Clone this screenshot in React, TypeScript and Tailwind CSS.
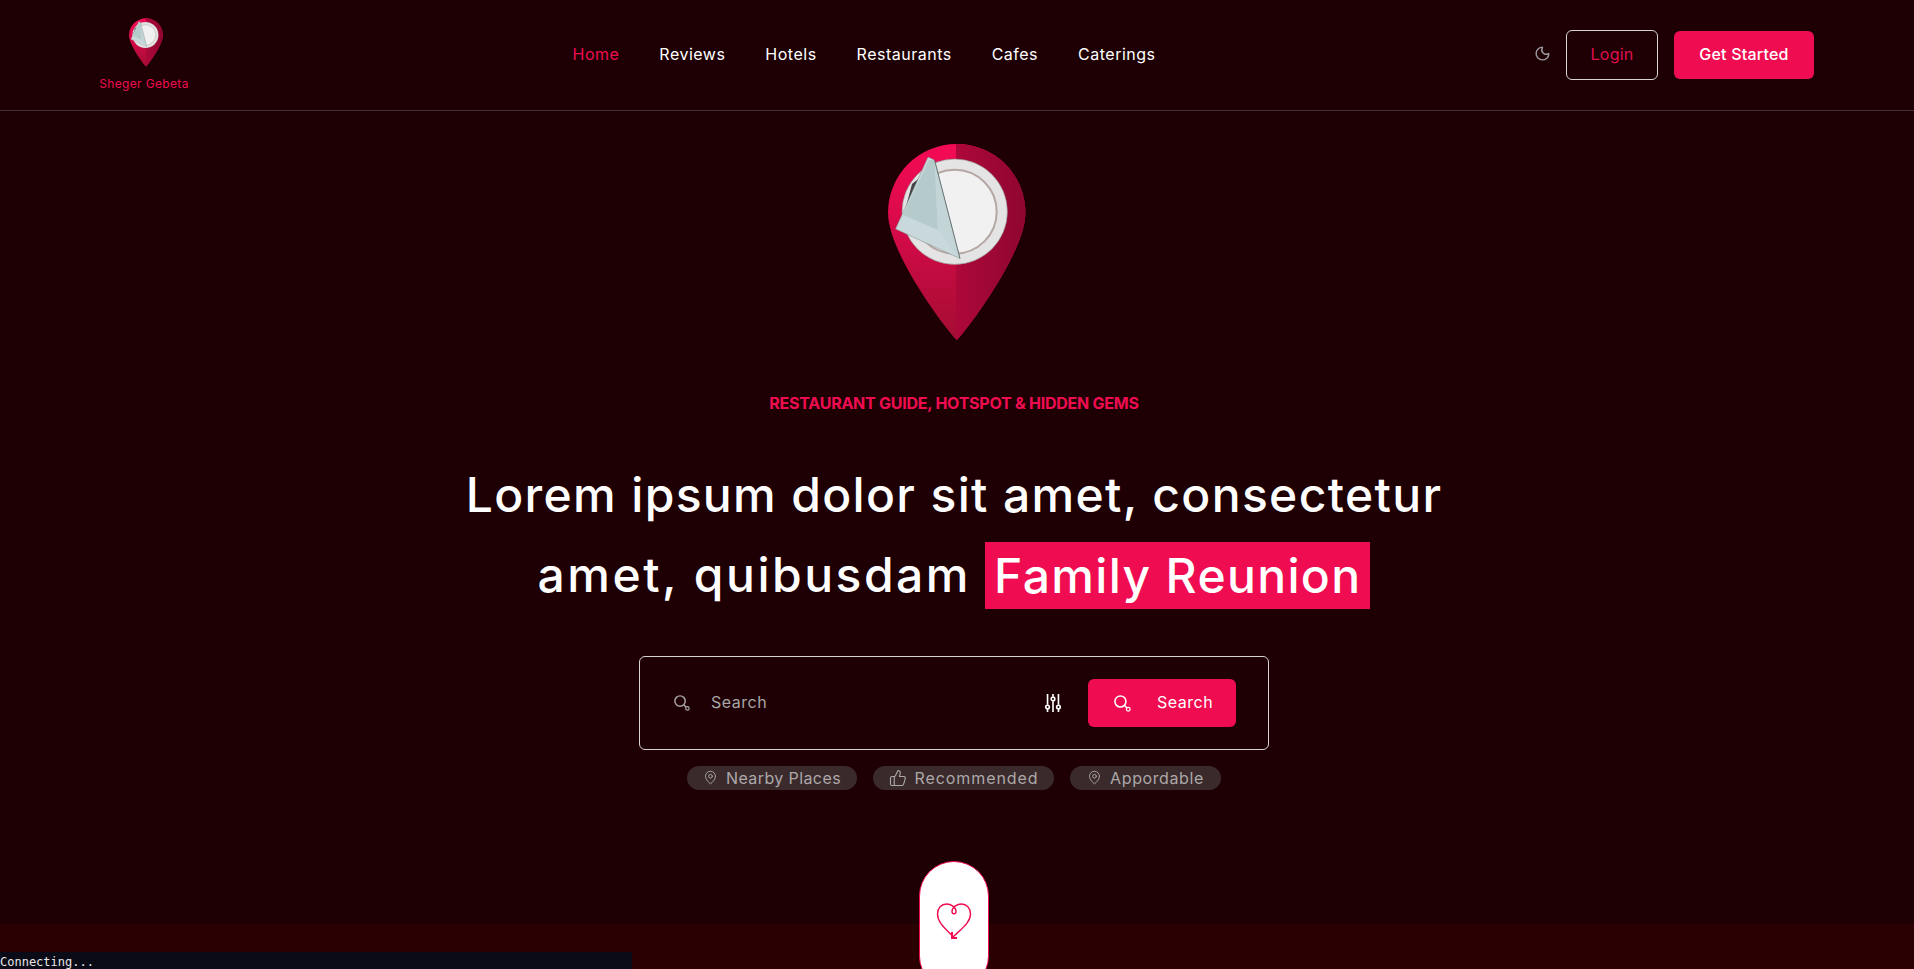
import { useId } from 'react';
import { Moon, MapPin, ThumbsUp } from 'lucide-react';

const navLinks = ['Home', 'Reviews', 'Hotels', 'Restaurants', 'Cafes', 'Caterings'];

function PinLogo({ className }: { className: string }) {
  const id = useId();
  const pin = 'M68.7 196 C62 191 0 110 0 68.7 A68.7 68.7 0 0 1 137.4 68.7 C137.4 110 75 191 68.7 196 Z';
  return (
    <svg viewBox="0 0 138 196" className={className}>
      <defs>
        <linearGradient id={`${id}l`} x1="0" y1="0" x2="0" y2="1">
          <stop offset="0" stopColor="#f50b55" />
          <stop offset="0.45" stopColor="#d50a47" />
          <stop offset="0.75" stopColor="#b90c3c" />
          <stop offset="1" stopColor="#a30d34" />
        </linearGradient>
        <linearGradient id={`${id}r`} x1="0" y1="0" x2="1" y2="0">
          <stop offset="0" stopColor="#cc0a44" />
          <stop offset="1" stopColor="#8f0630" />
        </linearGradient>
        <clipPath id={`${id}c`}>
          <rect x="68" y="0" width="70" height="196" />
        </clipPath>
      </defs>
      <path d={pin} fill={`url(#${id}l)`} />
      <path d={pin} fill={`url(#${id}r)`} clipPath={`url(#${id}c)`} />
      <circle cx="66.7" cy="67.7" r="52.7" fill="#e4e4e4" stroke="#8c8c8c" strokeWidth="0.6" />
      <circle cx="66.7" cy="67.7" r="42" fill="#f1f1f1" stroke="#b5a7a3" strokeWidth="2" />
      <path d="M40 27 L24 40 L16 70 L66 110 Z" fill="#1b1b1b" opacity="0.8" />
      <polygon points="40,13 46.5,16 72,114.5 7.5,85" fill="#c9d8da" stroke="#7d8a8b" strokeWidth="0.5" />
      <polygon points="41,16 46.5,16 50,86 15,71" fill="#b5cbcb" />
      <polygon points="46.5,16 72,114.5 50,86" fill="#c3d5d7" />
      <polyline points="46.5,16 72,114.5" fill="none" stroke="#55605f" strokeWidth="0.8" />
    </svg>
  );
}

function SearchIcon({ className }: { className: string }) {
  return (
    <svg viewBox="0.5 0.5 18.5 18.5" fill="none" stroke="currentColor" strokeWidth="1.7" className={className}>
      <circle cx="7.5" cy="7.5" r="6" />
      <path d="M12 12 L14.5 14.5" />
      <circle cx="16" cy="16" r="2" strokeWidth="1.4" />
    </svg>
  );
}

function SlidersIcon() {
  return (
    <svg viewBox="0 0 18 22" fill="none" stroke="white" strokeWidth="1.8" className="h-[20px] w-[18px]">
      <path d="M3 1 V13 M3 18 V21 M9 1 V4 M9 9 V21 M15 1 V13 M15 18 V21" />
      <circle cx="3" cy="15.5" r="2" />
      <circle cx="9" cy="6.5" r="2" />
      <circle cx="15" cy="15.5" r="2" />
    </svg>
  );
}

function HeartArrow() {
  return (
    <svg viewBox="0 0 36 38" fill="none" stroke="#f00c50" strokeWidth="1.4" className="h-[38px] w-[36px]">
      <path d="M16.5 34 C11 28 1.5 21 1.5 12 C1.5 6 5.5 2 10.5 2 C15 2 20 5 20 9.5 C20 12.5 16 12.5 16 9.5 C16 5 21 2 25.5 2 C30.5 2 34.5 6 34.5 12 C34.5 21 25 27 17 35" />
      <path d="M16 30 V36 H21" strokeWidth="2" />
    </svg>
  );
}

export default function App() {
  return (
    <div className="relative flex h-screen flex-col overflow-hidden bg-[#1e0004] font-['Inter','Liberation_Sans',sans-serif] text-white">
      {/* Header */}
      <header className="flex h-[111px] shrink-0 items-center justify-between border-b border-[#423136] pr-[100px] pl-[99px]">
        <div className="flex w-[90px] flex-col items-center">
          <PinLogo className="ml-[3px] h-[49px] w-[34px]" />
          <span className="mt-[9px] text-[12px] leading-4 font-normal tracking-[0.35px] whitespace-nowrap text-[#f00c50]">Sheger Gebeta</span>
        </div>
        <nav className="-mt-[2px] ml-[5px] flex items-center gap-10">
          {navLinks.map((link, i) => (
            <a key={link} className={`text-base tracking-[0.5px] ${i === 0 ? 'text-[#f00c50]' : 'text-white'}`}>
              {link}
            </a>
          ))}
        </nav>
        <div className="flex items-center">
          <Moon className="mr-[15px] mb-[3px] h-[17px] w-[17px] text-[#9a9aa2]" strokeWidth={2} />
          <button className="h-[50px] w-[92px] rounded-md border border-[#d8d4d4] pb-[2px] text-base tracking-[0.2px] text-[#e00d4f]">Login</button>
          <button className="ml-4 h-[48px] w-[140px] rounded-md bg-[#f00c50] pb-[2px] text-base font-medium tracking-[0.2px] text-white">Get Started</button>
        </div>
      </header>

      {/* Hero */}
      <main className="flex flex-1 flex-col items-center pt-[33px] pr-[6px]">
        <PinLogo className="ml-[6px] h-[196px] w-[138px]" />
        <p className="mt-[51px] text-base leading-6 font-bold tracking-[-0.25px] text-[#f00c50] uppercase">Restaurant guide, hotspot &amp; hidden gems</p>
        <h1 className="mt-10 text-center text-[48px] leading-[80px] font-medium tracking-[1.35px]">
          Lorem ipsum dolor sit amet, consectetur
          <br />
          <span className="tracking-[2.5px]">amet, quibusdam</span>{' '}
          <span className="inline-block -translate-y-[3px] bg-[#f00c50] px-[9px] align-middle text-[48px] leading-[67px]">Family Reunion</span>
        </h1>
        <div className="mt-[41px] flex h-[94px] w-[630px] items-center rounded-md border border-[#d8d4d4] pr-[32px] pl-[34px]">
          <SearchIcon className="h-[16px] w-[16px] text-[#a9a5a5]" />
          <span className="ml-[21px] flex-1 pb-[2px] text-base tracking-[0.5px] text-[#a9a5a5]">Search</span>
          <SlidersIcon />
          <button className="ml-[26px] flex h-[48px] w-[148px] items-center rounded-md bg-[#f00c50] pl-[26px] text-base text-white">
            <SearchIcon className="h-[17px] w-[17px]" />
            <span className="ml-[26px] pb-[2px] tracking-[0.5px]">Search</span>
          </button>
        </div>
        <div className="mt-4 flex items-center gap-4">
          <span className="flex h-[24px] w-[170px] items-center justify-center gap-2 rounded-full bg-[#3a2a2c] pb-[1px] text-base tracking-[0.4px] text-[#aca8a8]">
            <MapPin className="h-[15px] w-[15px]" strokeWidth={1.5} />
            Nearby Places
          </span>
          <span className="flex h-[24px] w-[181px] items-center justify-center gap-2 rounded-full bg-[#3a2a2c] pb-[1px] text-base tracking-[0.9px] text-[#aca8a8]">
            <ThumbsUp className="h-[18px] w-[18px]" strokeWidth={1.5} />
            Recommended
          </span>
          <span className="flex h-[24px] w-[151px] items-center justify-center gap-2 rounded-full bg-[#3a2a2c] pb-[1px] text-base tracking-[0.6px] text-[#aca8a8]">
            <MapPin className="h-[15px] w-[15px]" strokeWidth={1.5} />
            Appordable
          </span>
        </div>
      </main>

      {/* Next section peeking in, with the scroll pill over its edge */}
      <section className="relative h-[45px] shrink-0 bg-[#2b0003]">
        <div className="absolute top-[-63px] left-[919px] flex h-[130px] w-[70px] justify-center rounded-[35px] border-[1.5px] border-[#f00c50] bg-white pt-[40px]">
          <HeartArrow />
        </div>
      </section>

      <div className="absolute bottom-0 left-0 h-[17px] w-[632px] overflow-hidden bg-[#0b0b18] font-['DejaVu_Sans_Mono',monospace] text-[12px] leading-[20px] text-[#e6e6e6]">
        Connecting...
      </div>
    </div>
  );
}
